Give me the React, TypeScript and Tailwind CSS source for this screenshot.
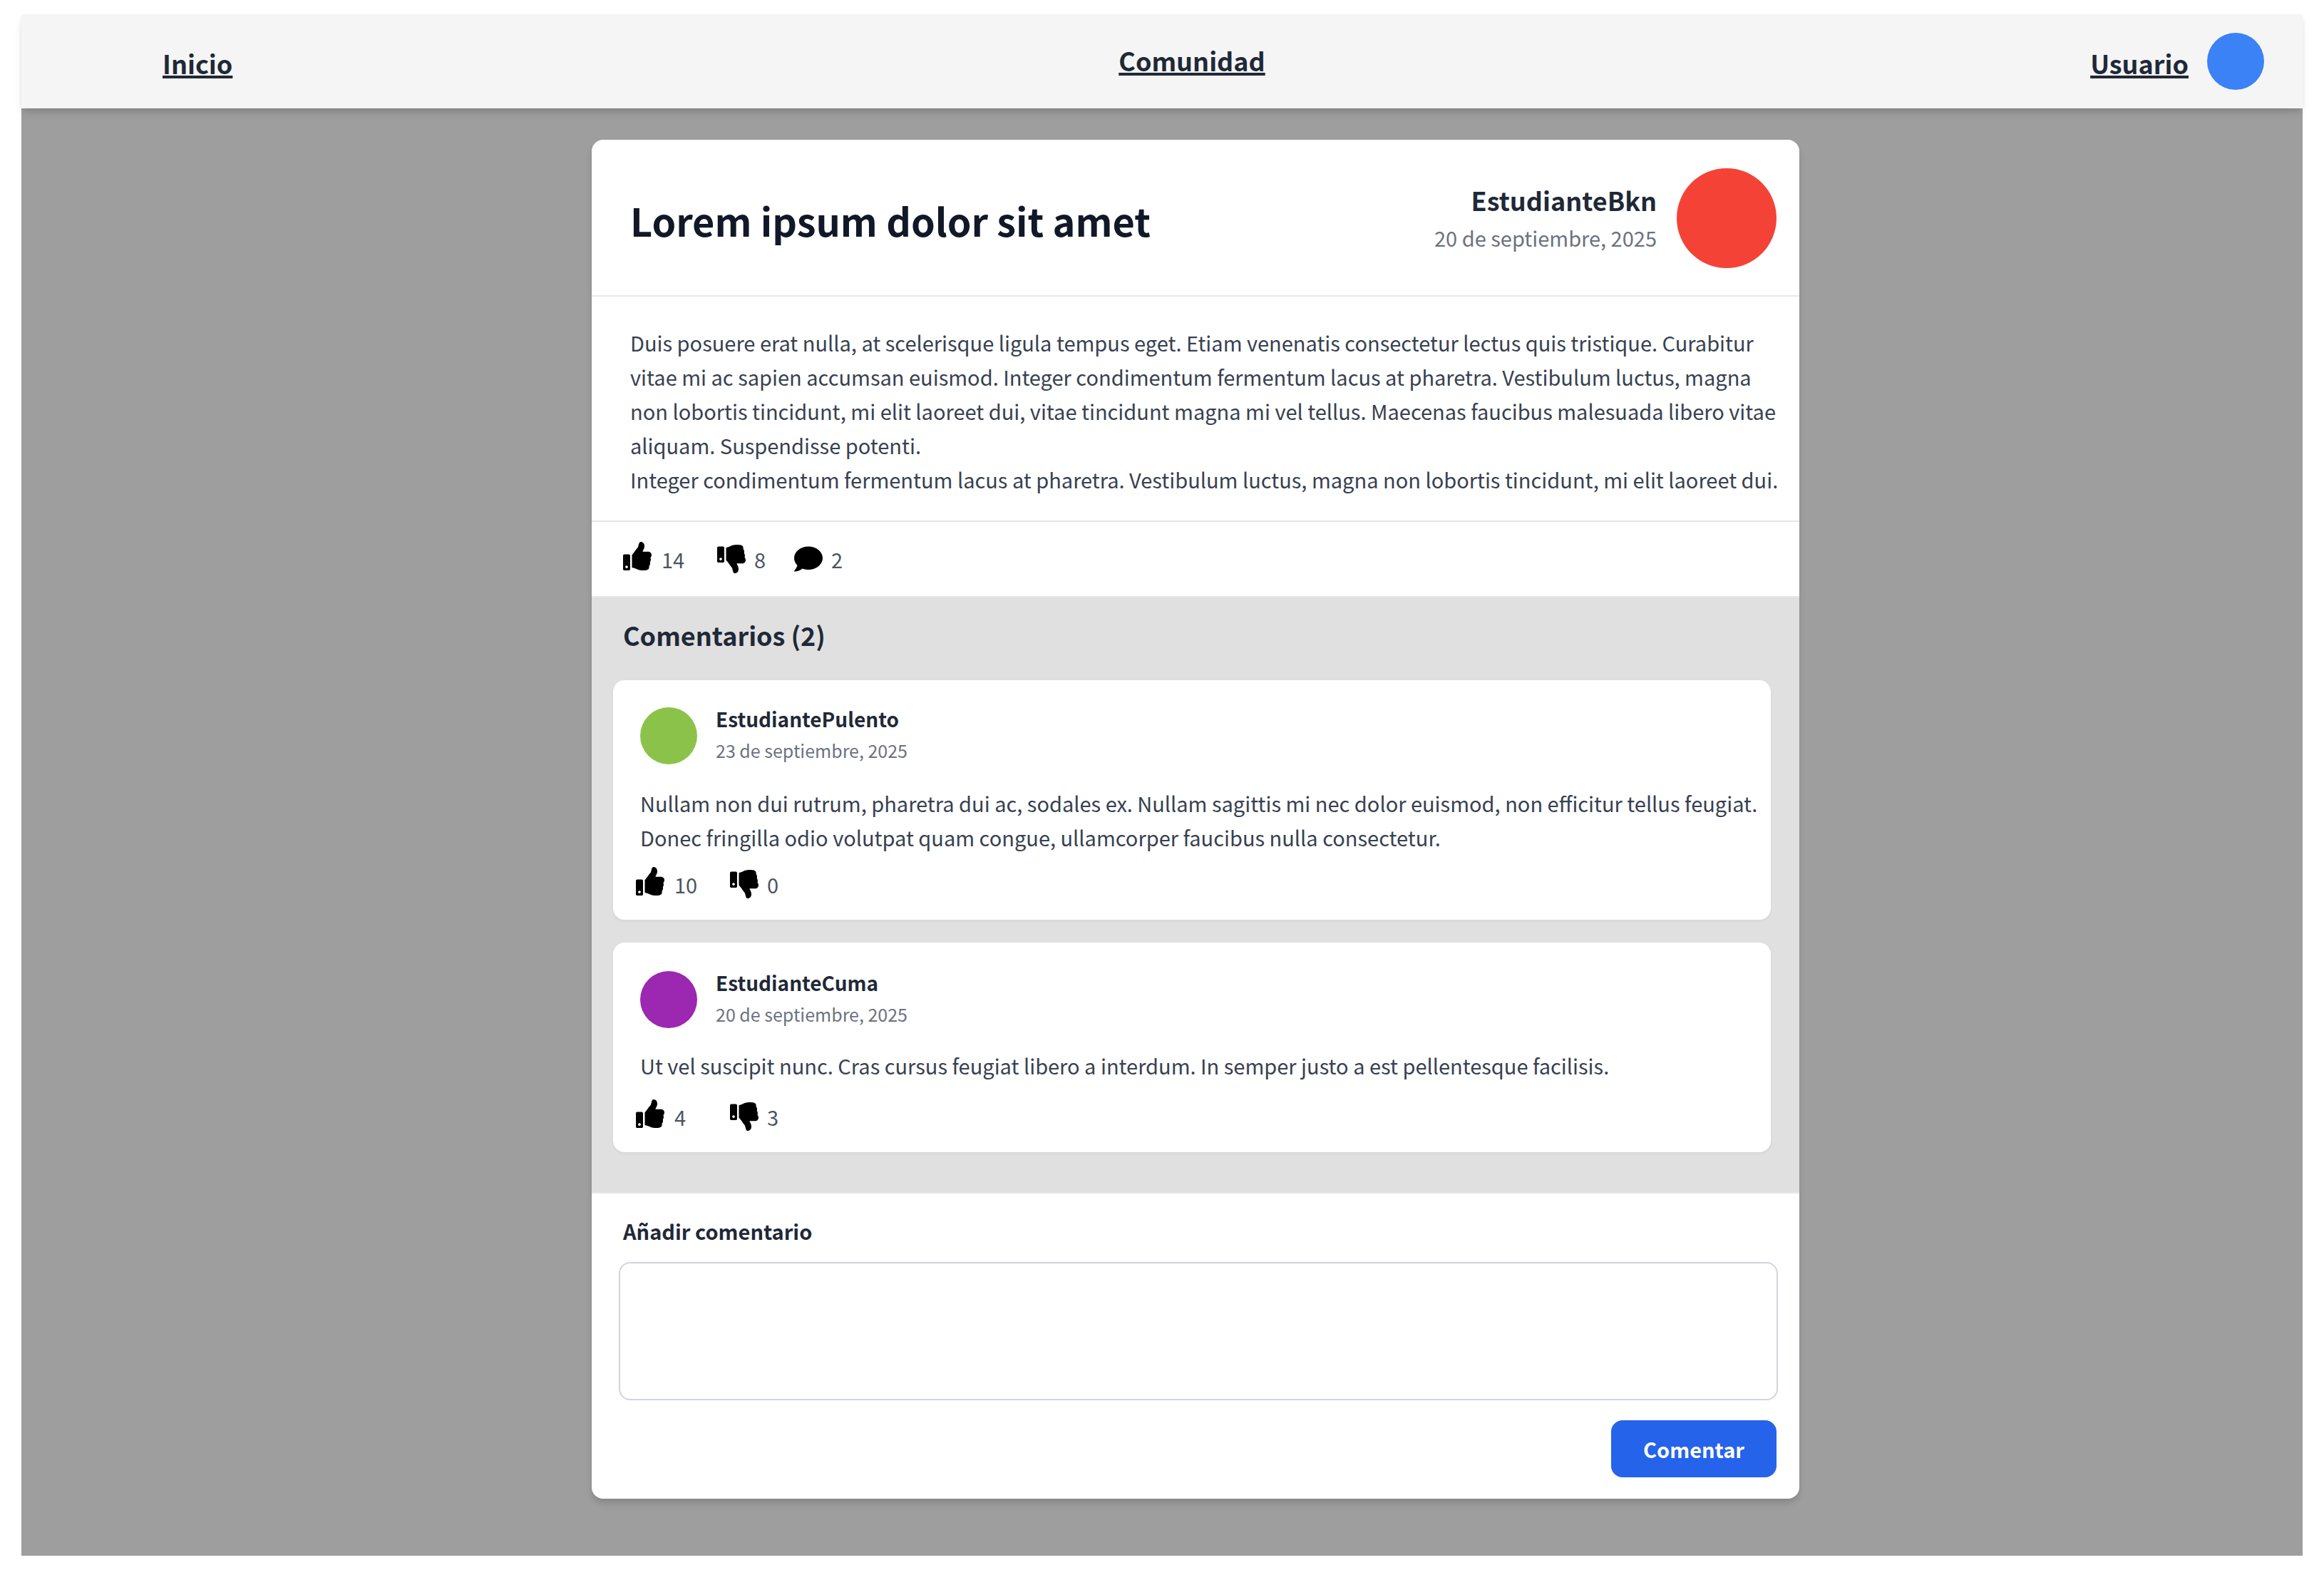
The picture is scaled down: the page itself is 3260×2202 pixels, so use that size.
import type { ReactNode } from "react";
import { FaComment, FaThumbsDown, FaThumbsUp } from "react-icons/fa";

type Comment = {
  author: string;
  date: string;
  text: string;
  likes: number;
  dislikes: number;
  avatar: string;
  padding: string;
  textMargin: string;
  actionsMargin: string;
};

const comments: Comment[] = [
  {
    author: "EstudiantePulento",
    date: "23 de septiembre, 2025",
    text: "Nullam non dui rutrum, pharetra dui ac, sodales ex. Nullam sagittis mi nec dolor euismod, non efficitur tellus feugiat. Donec fringilla odio volutpat quam congue, ullamcorper faucibus nulla consectetur.",
    likes: 10,
    dislikes: 0,
    avatar: "bg-[#8bc34a]",
    padding: "pt-[38px]",
    textMargin: "mt-[30px]",
    actionsMargin: "mt-[18px]",
  },
  {
    author: "EstudianteCuma",
    date: "20 de septiembre, 2025",
    text: "Ut vel suscipit nunc. Cras cursus feugiat libero a interdum. In semper justo a est pellentesque facilisis.",
    likes: 4,
    dislikes: 3,
    avatar: "bg-[#9c27b0]",
    padding: "pt-10",
    textMargin: "mt-7",
    actionsMargin: "mt-6",
  },
];

function Reaction({ label, className, children, count }: { label: string; className: string; children: ReactNode; count: number }) {
  return (
    <button type="button" aria-label={label} className={`flex items-start text-left text-[29px] leading-[48px] text-[#4b5563] ${className}`}>
      {children}
      <span>{count}</span>
    </button>
  );
}

function Reactions({ likes, dislikes, replies }: { likes: number; dislikes: number; replies?: number }) {
  return (
    <div className="flex h-12 items-start">
      <Reaction label="Me gusta" count={likes} className="w-[132px] gap-3.5">
        <FaThumbsUp className="size-10 shrink-0 text-black" />
      </Reaction>
      <Reaction label="No me gusta" count={dislikes} className="w-[108px] gap-3">
        <FaThumbsDown className="mt-1 size-10 shrink-0 text-black" />
      </Reaction>
      {replies !== undefined && (
        <Reaction label="Respuestas" count={replies} className="gap-3">
          <FaComment className="mt-1 size-10 shrink-0 text-black" />
        </Reaction>
      )}
    </div>
  );
}

function CommentCard({ comment }: { comment: Comment }) {
  return (
    <article className={`rounded-2xl bg-white pr-2 pb-[26px] pl-8 shadow-[0_2px_4px_rgba(0,0,0,0.05)] ${comment.padding}`}>
      <div className="flex gap-[26px] pl-1.5">
        <div className={`size-20 shrink-0 rounded-full ${comment.avatar}`} />
        <div>
          <h3 className="h-10 text-[28px] leading-8 font-semibold text-[#1f2937]">{comment.author}</h3>
          <p className="text-[25px] leading-10 text-[#6b7280]">{comment.date}</p>
        </div>
      </div>
      <p className={`pl-1.5 text-[29px] leading-[48px] text-[#374151] ${comment.textMargin}`}>{comment.text}</p>
      <div className={comment.actionsMargin}>
        <Reactions likes={comment.likes} dislikes={comment.dislikes} />
      </div>
    </article>
  );
}

export default function App() {
  return (
    <div className="min-h-screen bg-white px-[30px] py-5 font-['Noto_Sans_CJK_SC',sans-serif]">
      <div className="bg-[#9e9e9e] pb-20">
        <nav className="grid h-[132px] grid-cols-[1fr_auto_1fr] items-center bg-[#f5f5f5] pr-[54px] pl-[138px] text-4xl font-bold text-[#1f2937] shadow-[0_8px_12px_-2px_rgba(0,0,0,0.1),0_4px_8px_-2px_rgba(0,0,0,0.1)]">
          <a href="#inicio" className="justify-self-start pt-1 pl-[60px] underline decoration-4 underline-offset-2">Inicio</a>
          <a href="#comunidad" className="justify-self-center pb-1 underline decoration-4 underline-offset-2">Comunidad</a>
          <div className="flex items-center gap-[26px] justify-self-end">
            <a href="#usuario" className="pt-1 underline decoration-4 underline-offset-2">Usuario</a>
            <div className="size-20 rounded-full bg-[#3b82f6]" />
          </div>
        </nav>

        <div className="pt-11 pr-[706px] pl-[800px]">
          <main className="overflow-hidden rounded-2xl bg-white shadow-[0_8px_12px_-2px_rgba(0,0,0,0.1),0_4px_8px_-2px_rgba(0,0,0,0.1)]">
            <header className="flex items-center justify-between border-b-2 border-[#e5e7eb] pt-10 pr-8 pb-[38px] pl-[54px]">
              <h1 className="pt-1.5 text-[54px] leading-[72px] font-bold text-[#111827]">Lorem ipsum dolor sit amet</h1>
              <div className="flex items-center gap-7">
                <div className="pb-1 text-right">
                  <p className="text-4xl leading-[58px] font-bold text-[#1f2937]">EstudianteBkn</p>
                  <p className="text-[29px] leading-[48px] text-[#6b7280]">20 de septiembre, 2025</p>
                </div>
                <div className="size-[140px] rounded-full bg-[#f44336]" />
              </div>
            </header>

            <div className="border-b-2 border-[#e5e7eb] pt-10 pr-5 pb-[34px] pl-[54px] text-[29px] leading-[48px] text-[#374151]">
              <p>
                Duis posuere erat nulla, at scelerisque ligula tempus eget. Etiam venenatis consectetur lectus quis tristique. Curabitur vitae mi ac sapien accumsan euismod. Integer condimentum fermentum lacus at pharetra. Vestibulum luctus, magna non lobortis tincidunt, mi elit laoreet dui, vitae tincidunt magna mi vel tellus. Maecenas faucibus malesuada libero vitae aliquam. Suspendisse potenti.
              </p>
              <p>Integer condimentum fermentum lacus at pharetra. Vestibulum luctus, magna non lobortis tincidunt, mi elit laoreet dui.</p>
            </div>

            <div className="border-b-2 border-[#e5e7eb] pt-7 pb-7 pl-11">
              <Reactions likes={14} dislikes={8} replies={2} />
            </div>

            <section className="border-b-2 border-[#e5e7eb] bg-[#e0e0e0] pt-6 pr-10 pb-14 pl-[30px]">
              <h2 className="pl-3.5 text-4xl leading-[56px] font-bold text-[#1f2937]">Comentarios (2)</h2>
              <div className="mt-9 flex flex-col gap-8">
                {comments.map((comment) => (
                  <CommentCard key={comment.author} comment={comment} />
                ))}
              </div>
            </section>

            <form className="pt-7 pr-[30px] pb-[30px] pl-[38px]" onSubmit={(event) => event.preventDefault()}>
              <label htmlFor="comment" className="block pl-1.5 text-[29px] leading-[48px] font-bold text-[#1f2937]">Añadir comentario</label>
              <textarea id="comment" className="mt-5 block h-[194px] w-full resize-none rounded-2xl border-2 border-[#d1d5db] bg-white px-6 py-4 text-[29px] leading-[48px] text-[#374151]" />
              <div className="mt-7 flex justify-end pr-0.5">
                <button type="submit" className="h-20 w-[232px] rounded-2xl bg-[#2563eb] text-[29px] leading-[48px] font-bold text-white">Comentar</button>
              </div>
            </form>
          </main>
        </div>
      </div>
    </div>
  );
}
